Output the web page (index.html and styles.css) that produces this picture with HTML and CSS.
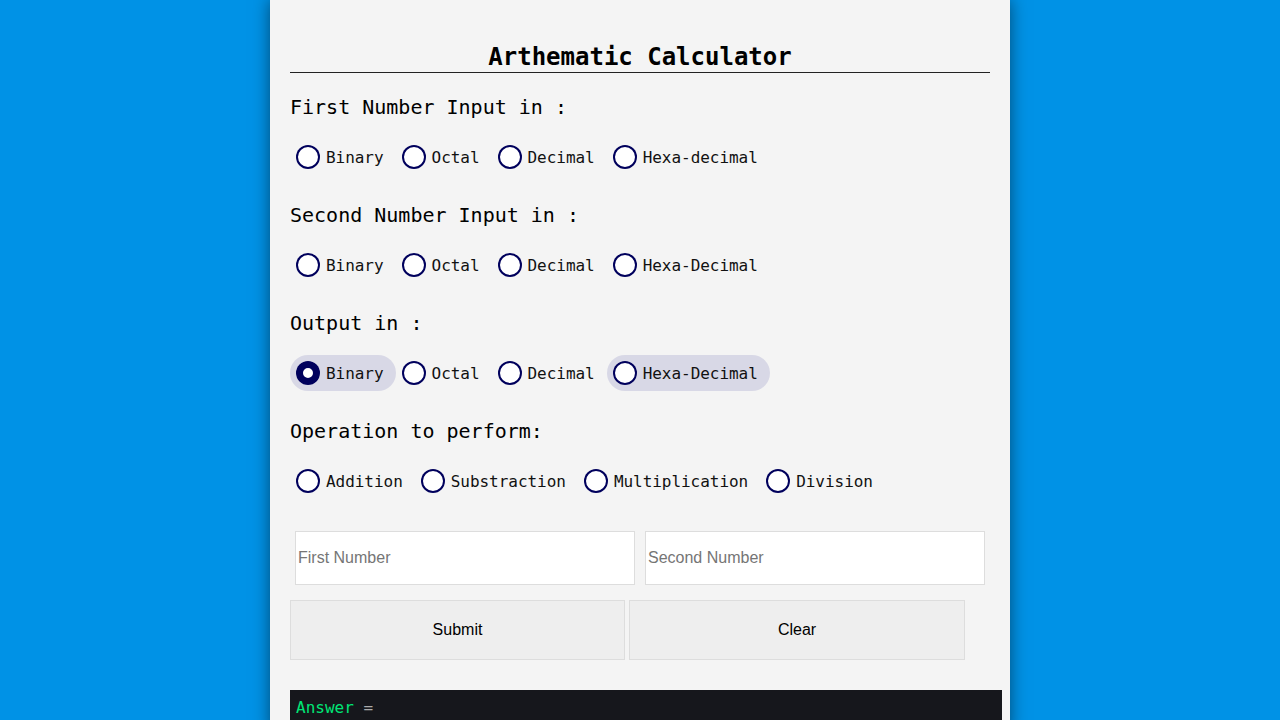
FILE: index.html
```html
<!DOCTYPE html>
<html lang="en">
<head>
    <meta charset="UTF-8">
    <meta name="viewport" content="width=device-width, initial-scale=1.0">
    <title>Arthematic Calculator</title>
    <link rel="stylesheet" href="styles.css">
</head>
<body>

<div class="calculator">
    <h1>Arthematic Calculator</h1>

    <div class="group first">
        <h3>First Number Input in :</h3>
        <div class="options">
            <label class="option"><input type="radio" name="first"><span>Binary</span></label>
            <label class="option"><input type="radio" name="first"><span>Octal</span></label>
            <label class="option"><input type="radio" name="first"><span>Decimal</span></label>
            <label class="option"><input type="radio" name="first"><span>Hexa-decimal</span></label>
        </div>
    </div>

    <div class="group">
        <h3>Second Number Input in :</h3>
        <div class="options">
            <label class="option"><input type="radio" name="second"><span>Binary</span></label>
            <label class="option"><input type="radio" name="second"><span>Octal</span></label>
            <label class="option"><input type="radio" name="second"><span>Decimal</span></label>
            <label class="option"><input type="radio" name="second"><span>Hexa-Decimal</span></label>
        </div>
    </div>

    <div class="group">
        <h3>Output in :</h3>
        <div class="options">
            <label class="option"><input type="radio" name="output" checked><span>Binary</span></label>
            <label class="option"><input type="radio" name="output"><span>Octal</span></label>
            <label class="option"><input type="radio" name="output"><span>Decimal</span></label>
            <label class="option hover"><input type="radio" name="output"><span>Hexa-Decimal</span></label>
        </div>
    </div>

    <div class="group">
        <h3>Operation to perform:</h3>
        <div class="options">
            <label class="option"><input type="radio" name="op"><span>Addition</span></label>
            <label class="option"><input type="radio" name="op"><span>Substraction</span></label>
            <label class="option"><input type="radio" name="op"><span>Multiplication</span></label>
            <label class="option"><input type="radio" name="op"><span>Division</span></label>
        </div>
    </div>

    <div class="numbers">
        <input type="text" placeholder="First Number">
        <input type="text" placeholder="Second Number">
    </div>

    <div class="buttons">
        <button>Submit</button>
        <button>Clear</button>
    </div>

    <div class="answer"><span class="label">Answer</span> <span class="eq">=</span></div>
</div>

</body>
</html>
```

FILE: styles.css
```css
body {
    margin: 0;
    background-color: #0092e6;
    font-family: "DejaVu Sans Mono", monospace;
}
.calculator {
    width: 700px;
    min-height: 100vh;
    margin: 0 auto;
    padding: 0 20px;
    background-color: #f4f4f4;
    box-shadow: 0 0 16px rgba(0, 0, 0, 0.5);
}
h1 {
    margin: 0;
    padding: 43px 0 1px;
    font-size: 24px;
    line-height: 28px;
    text-align: center;
    color: #000;
    border-bottom: 1px solid #222;
}
.group {
    margin-top: 28px;
}
.group.first {
    margin-top: 22px;
}
.group h3 {
    margin: 0 0 20px;
    font-size: 20px;
    line-height: 24px;
    font-weight: normal;
    color: #000;
}
.options {
    display: flex;
}
.option {
    display: inline-flex;
    align-items: center;
    padding: 6px 12px 6px 6px;
    border-radius: 99px;
    font-size: 16px;
    line-height: 24px;
    color: #111;
    cursor: pointer;
}
.option span {
    position: relative;
    top: 1px;
    letter-spacing: -0.04px;
}
.option:hover, .option.hover, .option:has(input:checked) {
    background-color: #d8d8e6;
}
.option input {
    appearance: none;
    width: 24px;
    height: 24px;
    margin: 0 6px 0 0;
    border-radius: 50%;
    background-color: #fff;
    box-shadow: inset 0 0 0 2px #00005c;
    cursor: pointer;
}
.option input:checked {
    box-shadow: inset 0 0 0 7px #00005c;
}
.numbers {
    display: flex;
    margin-top: 27px;
}
.numbers input {
    width: 340px;
    height: 54px;
    margin: 5px;
    padding: 1px 2px;
    box-sizing: border-box;
    border: 1px solid #ddd;
    background-color: #fff;
    font-family: "Liberation Sans", Arial, sans-serif;
    font-size: 16px;
}
.numbers input::placeholder {
    color: #757575;
}
.buttons {
    display: flex;
    gap: 4px;
    margin-top: 10px;
}
.buttons button {
    width: 335px;
    height: 60px;
    border: 1px solid #ddd;
    background-color: #eee;
    font-family: "Liberation Sans", Arial, sans-serif;
    font-size: 16px;
    color: #000;
    cursor: pointer;
}
.buttons button + button {
    width: 336px;
}
.buttons button:hover {
    background-color: #e4e4e4;
}
.answer {
    width: 700px;
    margin-top: 30px;
    padding: 7px 6px 5px;
    min-height: 30px;
    background-color: #16171c;
    font-size: 16px;
    line-height: 22px;
}
.answer .label {
    color: #00e676;
}
.answer .eq {
    color: #aaa;
}
```
